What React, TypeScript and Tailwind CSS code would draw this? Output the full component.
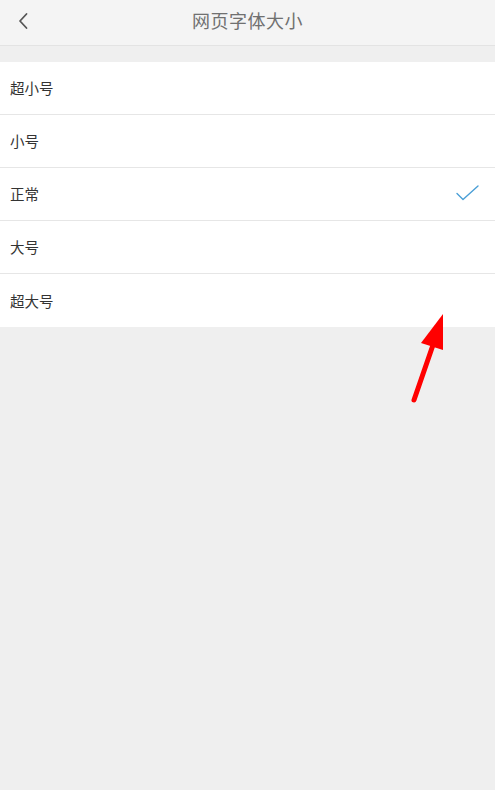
import React from 'react';

const SIZES = ['超小号', '小号', '正常', '大号', '超大号'];
const SELECTED = '正常';

const App: React.FC = () => {
  return (
    <div
      className="relative min-h-[790px] w-full bg-[#efefef]"
      style={{ fontFamily: '"Noto Sans CJK SC", "Noto Sans", sans-serif' }}
    >
      {/* Header */}
      <div className="relative flex h-[46px] items-center justify-center border-b border-[#e3e3e3] bg-[#f4f4f4]">
        <button className="absolute left-[14px] top-[10px] flex h-[22px] w-[18px] items-center justify-center">
          <svg width="12" height="18" viewBox="0 0 12 18" fill="none">
            <path d="M9.5 2 L3 9 L9.5 16" stroke="#555" strokeWidth="1.8" strokeLinecap="round" strokeLinejoin="round" />
          </svg>
        </button>
        <h1 className="mb-[4px] text-[18px] tracking-[0.5px] text-[#707070]">网页字体大小</h1>
      </div>

      {/* List */}
      <div className="mt-[16px] bg-white">
        {SIZES.map((s, i) => (
          <div
            key={s}
            className={`flex h-[53px] items-center justify-between pl-[10px] pr-[16px] ${
              i < SIZES.length - 1 ? 'border-b border-[#e6e6e6]' : ''
            }`}
          >
            <span className="text-[14.5px] text-[#333]">{s}</span>
            {s === SELECTED && (
              <svg width="23" height="18" viewBox="0 0 23 18" fill="none">
                <path d="M1 8.5 L7 14.5 L22 1" stroke="#4a9fd6" strokeWidth="1.4" strokeLinecap="round" strokeLinejoin="round" />
              </svg>
            )}
          </div>
        ))}
      </div>

      {/* Annotation arrow */}
      <svg className="pointer-events-none absolute left-0 top-0" width="495" height="420" viewBox="0 0 495 420">
        <line x1="414" y1="400" x2="433" y2="345" stroke="#ff0000" strokeWidth="5" strokeLinecap="round" />
        <polygon points="443,314 421,343 443,350" fill="#ff0000" />
      </svg>
    </div>
  );
};

export default App;
